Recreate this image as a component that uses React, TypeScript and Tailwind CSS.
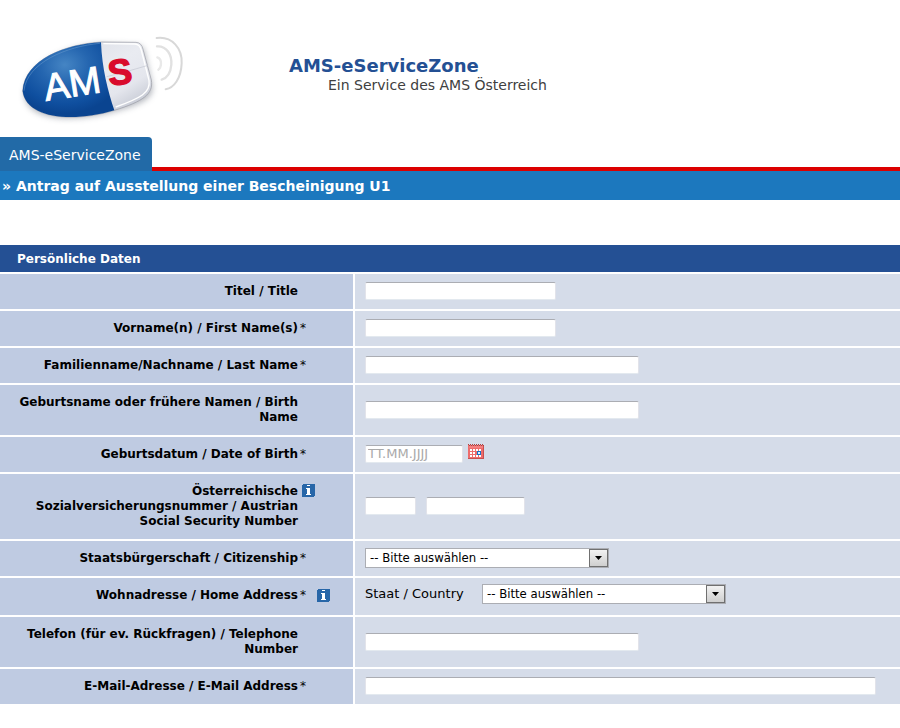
import React, { useState } from 'react';

interface RowProps {
  label: string;
  htmlFor: string;
  required?: boolean;
  info?: boolean;
  children: React.ReactNode;
}

const InfoIcon: React.FC = () => (
  <svg width="13" height="13" viewBox="0 0 13 13" shapeRendering="crispEdges">
    <rect width="13" height="13" rx="2" fill="#2766a8" />
    <path d="M5 1h3v1H5zM4 4h4v7H5V5H4zM4 10h5v1H4z" fill="#fff" />
  </svg>
);

const CalendarIcon: React.FC = () => (
  <svg width="16" height="16" viewBox="0 0 16 16" shapeRendering="crispEdges">
    <rect y="1" width="16" height="14" fill="#ee6c6c" />
    <path
      d="M0 0h1v1H0zM2 0h1v1H2zM4 0h1v1H4zM6 0h1v1H6zM8 0h1v1H8zM10 0h1v1h-1zM12 0h1v1h-1zM14 0h1v1h-1zM1 1h1v1H1zM3 1h1v1H3zM5 1h1v1H5zM7 1h1v1H7zM9 1h1v1H9zM11 1h1v1h-1zM13 1h1v1h-1zM15 1h1v1h-1z"
      fill="#a84444"
    />
    <path d="M1 2h14v2H1z" fill="#f47f7f" />
    <path
      d="M2 5h2v2H2zM5 5h2v2H5zM8 5h2v2H8zM11 5h2v2h-2zM2 8h2v2H2zM5 8h2v2H5zM2 11h2v2H2zM5 11h2v2H5zM8 11h2v2H8zM11 11h2v2h-2z"
      fill="#fff"
    />
    <path d="M9 7h4v4H9z" fill="#1673c8" />
    <path d="M10 8h2v2h-2z" fill="#d8f0ff" />
    <path d="M0 14h16v1H0zM15 2h1v13h-1z" fill="#c94f4f" />
  </svg>
);

const Logo: React.FC = () => (
  <svg width="200" height="120" viewBox="0 0 600 360" role="img" aria-label="AMS">
    <defs>
      <radialGradient id="blue" cx="0.46" cy="0.3" r="0.65">
        <stop offset="0" stopColor="#4585c4" />
        <stop offset="0.4" stopColor="#2566b0" />
        <stop offset="0.8" stopColor="#0f4f9f" />
        <stop offset="1" stopColor="#0a4490" />
      </radialGradient>
      <linearGradient id="silver" x1="0" y1="0" x2="1" y2="1">
        <stop offset="0" stopColor="#d5d8e1" />
        <stop offset="0.5" stopColor="#e9ebf1" />
        <stop offset="0.7" stopColor="#e4e6ed" />
        <stop offset="1" stopColor="#aeb3c0" />
      </linearGradient>
      <filter id="shade" x="-20%" y="-20%" width="140%" height="150%">
        <feGaussianBlur stdDeviation="10" />
      </filter>
    </defs>
    <path
      d="M74 225C78 128 210 78 302 72L412 76Q428 78 433 96L456 194C462 234 432 248 344 274C226 306 82 306 74 225Z"
      fill="#8d929c"
      opacity="0.7"
      filter="url(#shade)"
    />
    <path
      d="M68 213C74 118 198 72 306 66L408 67Q425 68 429 88L454 180C461 222 430 244 343 271C218 309 78 296 68 213Z"
      fill="url(#silver)"
      stroke="#9a9ca5"
      strokeWidth="2"
    />
    <path
      d="M310 71L405 72Q420 73 424 91L447 181C453 218 421 234 347 261"
      fill="none"
      stroke="#fff"
      strokeWidth="4"
    />
    <path d="M320 170Q370 158 444 136" fill="none" stroke="#c3c6d0" strokeWidth="2" />
    <path
      d="M68 213C74 118 198 72 303 67C306 146 324 214 343 271C218 309 78 296 68 213Z"
      fill="url(#blue)"
    />
    <path d="M72 212C80 128 200 79 300 70" fill="none" stroke="#699bcd" strokeWidth="3" opacity="0.5" />
    <g transform="rotate(-9 138 243)" fontFamily="'Liberation Sans', sans-serif">
      <text x="138" y="243" fontSize="114" fill="#fff" stroke="#fff" strokeWidth="3">
        AM
      </text>
    </g>
    <g
      transform="rotate(-7 330 195)"
      fontFamily="'Liberation Sans', sans-serif"
      fontWeight="700"
    >
      <text x="328" y="197" fontSize="108" fill="#d90b2c" stroke="#d90b2c" strokeWidth="4">
        S
      </text>
    </g>
    <g fill="none" strokeLinecap="round">
      <path d="M470 54C517 48 547 86 545 130C543 176 522 203 497 208" stroke="#d8d8d8" strokeWidth="6" />
      <path d="M471 79C500 77 516 104 514 134C512 158 502 174 485 179" stroke="#e1e1e1" strokeWidth="7" />
      <path d="M472 112Q484 116 483 132Q482 145 475 149" stroke="#e9e9e9" strokeWidth="7" />
    </g>
  </svg>
);

const Row: React.FC<RowProps> = ({ label, htmlFor, required, info, children }) => (
  <div className="grid grid-cols-[353px_1fr] gap-0.5 mt-0.5">
    <div className="bg-[#bfcbe2] flex items-start py-2.5">
      <label
        htmlFor={htmlFor}
        className="w-[298px] pl-4 text-right text-xs leading-[15px] font-bold"
      >
        {label}
      </label>
      {required && <span className="w-[9px] pl-0.5 text-xs leading-[15px]">*</span>}
      {info && (
        <button
          type="button"
          aria-label="Info"
          className={required ? 'ml-2.5 mt-px' : 'ml-1'}
        >
          <InfoIcon />
        </button>
      )}
    </div>
    <div className="bg-[#d5dce9] flex items-center gap-2.5 px-2.5 pb-px">
      {children}
    </div>
  </div>
);

const TextField: React.FC<React.InputHTMLAttributes<HTMLInputElement>> = ({
  className,
  ...props
}) => (
  <input
    type="text"
    className={`h-[18px] max-w-full min-w-0 bg-white border border-t-[#abadb3] border-x-[#e2e3ea] border-b-[#e3e9ef] rounded-xs px-0.5 text-[13px] placeholder:text-[#a9a9a9] ${className}`}
    {...props}
  />
);

const CountrySelect: React.FC<{ id: string }> = ({ id }) => (
  <div className="relative w-[244px]">
    <select
      id={id}
      className="block w-full h-5 appearance-none bg-white border border-[#abadb3] pl-1 pr-5 text-[13px] leading-[18px] font-['DejaVu_Sans_Condensed','DejaVu_Sans',sans-serif] font-stretch-condensed"
    >
      <option>-- Bitte auswählen --</option>
    </select>
    <span className="absolute right-px top-px w-[19px] h-[18px] border border-[#707070] bg-linear-to-b from-[#f2f2f2] to-[#cfcfcf] flex items-center justify-center pointer-events-none">
      <svg width="7" height="4" viewBox="0 0 7 4">
        <path d="M0 0h7L3.5 4z" fill="#000" />
      </svg>
    </span>
  </div>
);

const App: React.FC = () => {
  const [birthDate, setBirthDate] = useState('');

  return (
    <div className="bg-white text-black font-['Verdana','DejaVu_Sans',sans-serif]">
      <header className="flex items-start pt-5 h-[137px]">
        <Logo />
        <div className="pl-[89px] pt-9">
          <h1 className="text-lg leading-5 font-bold text-[#245094]">
            AMS-eServiceZone
          </h1>
          <p className="pl-[39px] text-sm leading-[18px] text-[#404040]">
            Ein Service des AMS Österreich
          </p>
        </div>
      </header>

      <nav className="flex items-end">
        <a
          href="#"
          className="h-[34px] w-[152px] pl-[9px] pt-0.5 flex items-center whitespace-nowrap rounded-tr bg-[#226aa7] text-white text-sm"
        >
          AMS-eServiceZone
        </a>
        <div className="flex-1 h-1 bg-[#dc0000]" />
      </nav>
      <h2 className="h-[29px] pl-0.5 flex items-center bg-[#1c78be] text-white text-sm font-bold">
        » Antrag auf Ausstellung einer Bescheinigung U1
      </h2>

      <form className="mt-[45px]" onSubmit={(e) => e.preventDefault()}>
        <h3 className="h-[27px] pl-[17px] flex items-center bg-[#245094] text-white text-xs font-bold">
          Persönliche Daten
        </h3>

        <Row label="Titel / Title" htmlFor="title">
          <TextField id="title" className="w-[191px]" />
        </Row>
        <Row label="Vorname(n) / First Name(s)" htmlFor="firstName" required>
          <TextField id="firstName" className="w-[191px]" />
        </Row>
        <Row label="Familienname/Nachname / Last Name" htmlFor="lastName" required>
          <TextField id="lastName" className="w-[274px]" />
        </Row>
        <Row label="Geburtsname oder frühere Namen / Birth Name" htmlFor="birthName">
          <TextField id="birthName" className="w-[274px]" />
        </Row>
        <Row label="Geburtsdatum / Date of Birth" htmlFor="birthDate" required>
          <div className="flex items-center gap-[5px]">
            <TextField
              id="birthDate"
              className="w-[98px]"
              placeholder="TT.MM.JJJJ"
              value={birthDate}
              onChange={(e) => setBirthDate(e.target.value)}
            />
            <button type="button" aria-label="Kalender" className="pb-1">
              <CalendarIcon />
            </button>
          </div>
        </Row>
        <Row
          label="Österreichische Sozialversicherungsnummer / Austrian Social Security Number"
          htmlFor="ssn"
          info
        >
          <TextField id="ssn" className="w-[51px]" />
          <TextField aria-label="Geburtsdatum" className="w-[99px]" />
        </Row>
        <Row label="Staatsbürgerschaft / Citizenship" htmlFor="citizenship" required>
          <CountrySelect id="citizenship" />
        </Row>
        <Row label="Wohnadresse / Home Address" htmlFor="country" required info>
          <div className="flex items-center pt-1.5 pb-2.5">
            <label htmlFor="country" className="w-[117px] text-[13px] leading-5">
              Staat / Country
            </label>
            <CountrySelect id="country" />
          </div>
        </Row>
        <Row
          label="Telefon (für ev. Rückfragen) / Telephone Number"
          htmlFor="phone"
        >
          <TextField id="phone" type="tel" className="w-[274px]" />
        </Row>
        <Row label="E-Mail-Adresse / E-Mail Address" htmlFor="email" required>
          <TextField id="email" type="email" className="w-[511px]" />
        </Row>
      </form>
    </div>
  );
};

export default App;
